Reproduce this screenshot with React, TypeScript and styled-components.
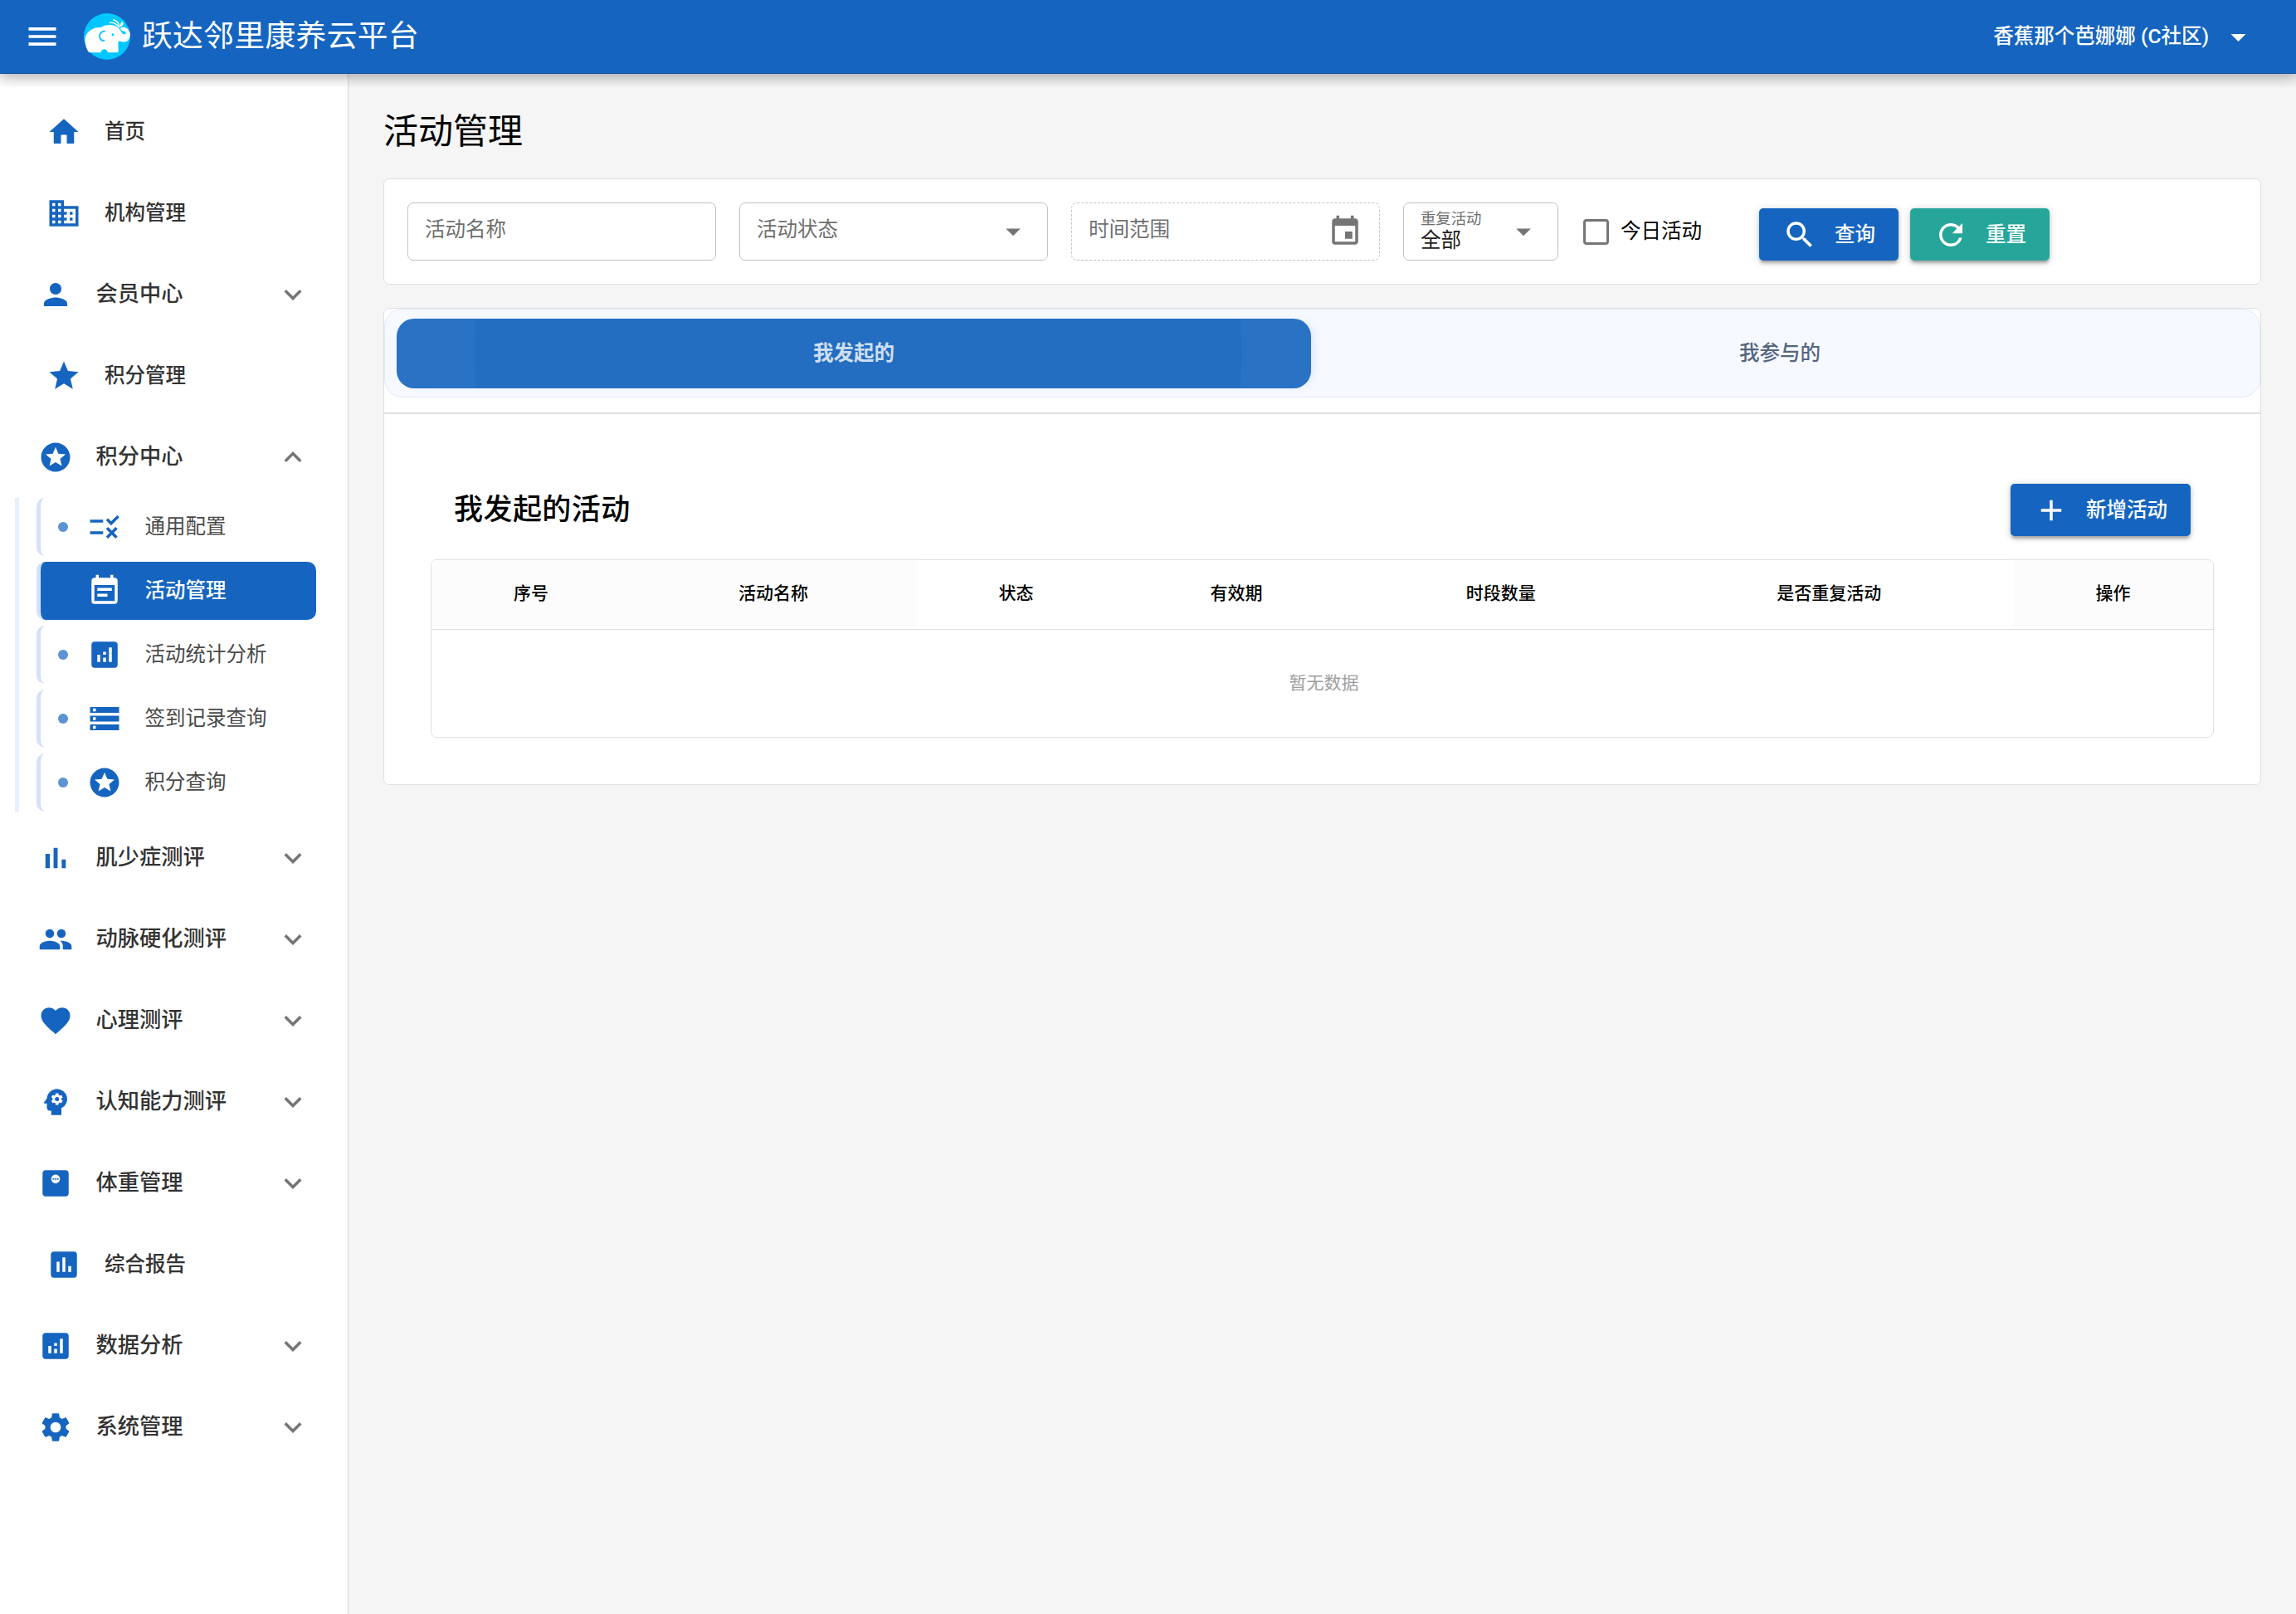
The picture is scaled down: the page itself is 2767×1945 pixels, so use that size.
import React from 'react';
import styled, { createGlobalStyle, css } from 'styled-components';
import type { IconType } from 'react-icons';
import {
  MdAdd,
  MdAnalytics,
  MdArrowDropDown,
  MdAssessment,
  MdBusiness,
  MdEvent,
  MdEventNote,
  MdFavorite,
  MdHome,
  MdKeyboardArrowDown,
  MdKeyboardArrowUp,
  MdMenu,
  MdMonitorWeight,
  MdPeople,
  MdPerson,
  MdPsychology,
  MdRefresh,
  MdRule,
  MdSearch,
  MdSettings,
  MdStar,
  MdStars,
  MdStorage,
} from 'react-icons/md';

const colors = {
  primary: '#1565c0',
  secondary: '#26a69a',
  page: '#f5f5f5',
  line: '#e0e0e0',
  icon: '#757575',
};

const GlobalStyle = createGlobalStyle`
  *, *::before, *::after { box-sizing: border-box; }
  body {
    margin: 0;
    background: ${colors.page};
    color: #000;
    font-family: Roboto, "Noto Sans CJK SC", sans-serif;
    font-size: 24.5px;
    line-height: 1.5;
  }
  svg { display: block; flex: none; }
`;

const Layout = styled.div`
  display: flex;
  flex-direction: column;
  height: 1945px;
  overflow: hidden;
`;

const Header = styled.header`
  position: relative;
  z-index: 2;
  display: flex;
  align-items: center;
  flex: none;
  height: 89px;
  padding: 0 48px 0 29px;
  background: ${colors.primary};
  border-bottom: 1px solid #124f92;
  color: #fff;
`;

/* Clips the header's shadow to a short strip under the bar. */
const HeaderShadow = styled.div`
  position: absolute;
  inset: 0 0 -17px 0;
  overflow: hidden;
  pointer-events: none;
  z-index: -1;

  &::after {
    content: '';
    position: absolute;
    inset: 0 0 16px 0;
    box-shadow: 0 0 17.5px 3.5px rgba(0, 0, 0, 0.2), 0 0 17.5px rgba(0, 0, 0, 0.24);
  }
`;

const Logo = styled.svg`
  width: 56px;
  height: 56px;
  margin-left: 28px;
`;

const Brand = styled.div`
  margin-left: 14px;
  font-size: 36.75px;
  letter-spacing: 0.01em;
  line-height: 56px;
`;

const Account = styled.button`
  display: flex;
  align-items: center;
  gap: 14px;
  margin-left: auto;
  padding: 0;
  border: 0;
  background: none;
  color: inherit;
  font: 500 24.5px/42px Roboto, "Noto Sans CJK SC", sans-serif;
`;

const Body = styled.div`
  display: flex;
  flex: 1;
  min-height: 0;
`;

const Sidebar = styled.nav`
  flex: none;
  width: 420px;
  padding-top: 21px;
  background: #fff;
  border-right: 1px solid #d9d9d9;
`;

const NavRow = styled.div<{ $leaf?: boolean }>`
  display: flex;
  align-items: center;
  height: 98px;
  padding: 0 45px 0 ${(p) => (p.$leaf ? 56 : 45.5)}px;
  color: #333;
  font-size: ${(p) => (p.$leaf ? 24.5 : 26.25)}px;
  font-weight: 500;

  & > svg:first-child { color: ${colors.primary}; }
`;

const NavLabel = styled.span`
  flex: 1;
  margin-left: 28px;
  white-space: nowrap;
`;

const SubNav = styled.div`
  display: flex;
  flex-direction: column;
  gap: 7px;
  margin: 0 0 7px 18px;
  padding-left: 21px;
  border-left: 5px solid #e8effd;
`;

const SubRow = styled.div<{ $active?: boolean }>`
  display: flex;
  align-items: center;
  width: 337px;
  height: 70px;
  padding-left: 21px;
  border-left: 5px solid #d5e1f8;
  border-radius: 10.5px;
  color: #4a4a4a;

  & > svg { color: ${colors.primary}; margin-left: 22.5px; }

  ${(p) =>
    p.$active &&
    css`
      background: ${colors.primary};
      color: #fff;
      font-weight: 500;
      & > svg { color: #fff; }
    `}
`;

const Dot = styled.i<{ $hidden?: boolean }>`
  width: 12px;
  height: 12px;
  border-radius: 50%;
  background: #5b93d3;
  visibility: ${(p) => (p.$hidden ? 'hidden' : 'visible')};
`;

const SubLabel = styled.span`
  margin-left: 28px;
  white-space: nowrap;
`;

const Main = styled.main`
  flex: 1;
  min-width: 0;
  padding: 42px 42px 0;
`;

const PageTitle = styled.h1`
  margin: 0 0 28px;
  font-size: 42px;
  font-weight: 400;
  line-height: 56px;
`;

const Card = styled.section`
  background: #fff;
  border: 1px solid ${colors.line};
  border-radius: 7px;
`;

const FilterCard = styled(Card)`
  display: flex;
  align-items: flex-end;
  gap: 28px;
  height: 128px;
  padding: 28px;
  margin-bottom: 28px;
`;

const Field = styled.div<{ $width: number; $dashed?: boolean }>`
  display: flex;
  align-items: center;
  width: ${(p) => p.$width}px;
  height: 70px;
  padding: 0 20px;
  border: 1px ${(p) => (p.$dashed ? 'dashed' : 'solid')} #c2c2c2;
  border-radius: 7px;
  color: ${colors.icon};

  & > svg { margin-left: auto; }
`;

const Placeholder = styled.span`
  color: #6f6f6f;
  line-height: 35px;
  padding-bottom: 5px;
`;

const Stacked = styled.div`
  display: flex;
  flex-direction: column;
  padding-bottom: 2px;
`;

const SmallLabel = styled.span`
  font-size: 18.375px;
  line-height: 24px;
  color: #6f6f6f;
`;

const FieldValue = styled.span`
  line-height: 28px;
  color: #212121;
`;

const CheckField = styled.label`
  display: flex;
  align-items: center;
  gap: 14px;
  width: 186px;
  height: 70px;
  padding-left: 2px;
  white-space: nowrap;
`;

const CheckBox = styled.span`
  flex: none;
  width: 31px;
  height: 31px;
  border: 3px solid ${colors.icon};
  border-radius: 4px;
`;

const Actions = styled.div`
  display: flex;
  gap: 14px;
`;

const Button = styled.button<{ $color: string }>`
  display: flex;
  align-items: center;
  gap: 21px;
  height: 63px;
  padding: 0 28px;
  border: 0;
  border-radius: 5px;
  background: ${(p) => p.$color};
  color: #fff;
  font: 500 24.5px/42px Roboto, "Noto Sans CJK SC", sans-serif;
  white-space: nowrap;
  box-shadow: 0 1.75px 8.75px rgba(0, 0, 0, 0.2), 0 3.5px 3.5px rgba(0, 0, 0, 0.14),
    0 5.25px 1.75px -3.5px rgba(0, 0, 0, 0.12);
`;

const TabCard = styled(Card)`
  height: 575px;
`;

const Tabs = styled.div`
  display: flex;
  gap: 14px;
  height: 107px;
  padding: 11px 27px 0 14px;
  background: #f6f9ff;
  border: 1px solid #e2e9f6;
  border-radius: 22px;
`;

const Tab = styled.div<{ $active?: boolean }>`
  display: flex;
  align-items: center;
  justify-content: center;
  flex: 1;
  height: 84px;
  border-radius: 21px;
  color: #56657f;
  font-weight: 500;

  ${(p) =>
    p.$active &&
    css`
      background: radial-gradient(circle at 556px 42px, #246ec1 462px, #2a72c3 463px);
      box-shadow: 7px 0 14px -7px rgba(21, 101, 192, 0.18);
      color: #cfdff2;
      font-weight: 600;
    `}
`;

const Separator = styled.hr`
  height: 2px;
  margin: 18px 0 0;
  border: 0;
  background: ${colors.line};
`;

const Panel = styled.div`
  padding: 84px 56px 0;
`;

const PanelHead = styled.div`
  display: flex;
  align-items: center;
  justify-content: space-between;
  height: 63px;
  padding: 0 28px;
`;

const PanelTitle = styled.h2`
  margin: 0;
  font-size: 35px;
  font-weight: 500;
  letter-spacing: 0.0125em;
  line-height: 56px;
`;

const Table = styled.div`
  display: flex;
  flex-direction: column;
  margin-top: 28px;
  height: 215px;
  border: 1px solid ${colors.line};
  border-radius: 7px;
  overflow: hidden;
  font-size: 21px;
`;

const HeadRow = styled.div`
  display: grid;
  grid-template-columns: 240fr 344fr 241fr 290fr 347.5fr 443.5fr 241fr;
  flex: none;
  height: 84px;
  border-bottom: 1px solid ${colors.line};
`;

const HeadCell = styled.div<{ $pinned?: boolean }>`
  display: flex;
  align-items: center;
  justify-content: center;
  padding-bottom: 1px;
  background: ${(p) => (p.$pinned ? '#fcfcfc' : '#fff')};
  font-weight: 500;
`;

const Empty = styled.div`
  display: flex;
  flex: 1;
  align-items: center;
  justify-content: center;
  padding-left: 4px;
  color: #9e9e9e;
`;

type NavEntry = {
  label: string;
  icon: IconType;
  leaf?: boolean;
  open?: boolean;
  children?: { label: string; icon: IconType; active?: boolean }[];
};

const BarsIcon: IconType = ({ size }) => (
  <svg viewBox="0 0 24 24" width={size} height={size} fill="currentColor">
    <path d="M5 9.2h3V19H5zM10.6 5h2.8v14h-2.8zm5.6 8H19v6h-2.8z" />
  </svg>
);

const navigation: NavEntry[] = [
  { label: '首页', icon: MdHome, leaf: true },
  { label: '机构管理', icon: MdBusiness, leaf: true },
  { label: '会员中心', icon: MdPerson },
  { label: '积分管理', icon: MdStar, leaf: true },
  {
    label: '积分中心',
    icon: MdStars,
    open: true,
    children: [
      { label: '通用配置', icon: MdRule },
      { label: '活动管理', icon: MdEventNote, active: true },
      { label: '活动统计分析', icon: MdAnalytics },
      { label: '签到记录查询', icon: MdStorage },
      { label: '积分查询', icon: MdStars },
    ],
  },
  { label: '肌少症测评', icon: BarsIcon },
  { label: '动脉硬化测评', icon: MdPeople },
  { label: '心理测评', icon: MdFavorite },
  { label: '认知能力测评', icon: MdPsychology },
  { label: '体重管理', icon: MdMonitorWeight },
  { label: '综合报告', icon: MdAssessment, leaf: true },
  { label: '数据分析', icon: MdAnalytics },
  { label: '系统管理', icon: MdSettings },
];

const columns = [
  { label: '序号', pinned: true },
  { label: '活动名称', pinned: true },
  { label: '状态' },
  { label: '有效期' },
  { label: '时段数量' },
  { label: '是否重复活动' },
  { label: '操作', pinned: true },
];

function ElephantLogo() {
  return (
    <Logo viewBox="0 0 168 168">
      <circle cx="84" cy="84" r="84" fill="#00c8ff" />
      <path
        fill="#fff"
        d="M4 96C6 70 26 51 62 51C72 44 84 41 97 42C114 43 127 51 134 64C137 72 142 77 148 76C153 75 154 69 149 66C145 64 140 64 137 62L131 53C140 48 153 50 160 58C168 68 170 82 164 92C158 104 142 107 127 100L124 108L125 138Q124 142 120 142L86 142C86 126 62 126 62 142L20 142C12 134 6 120 4 96Z"
      />
      <path
        d="M75 64C60 66 53 80 59 91C62 97 67 99 73 99"
        fill="none"
        stroke="#00c8ff"
        strokeWidth="5.5"
        strokeLinecap="round"
      />
      <circle cx="105" cy="77" r="4.5" fill="#00c8ff" />
      <g fill="none" stroke="#fff" strokeWidth="4.5" strokeLinecap="round">
        <path d="M95 34C104 32 117 37 127 50" />
        <path d="M107 24C117 25 125 34 129 47" />
        <path d="M134 45C134 39 136 34 140 33C142 38 139 43 134 46" strokeWidth="4" />
      </g>
    </Logo>
  );
}

export default function App() {
  return (
    <Layout>
      <GlobalStyle />
      <Header>
        <HeaderShadow />
        <MdMenu size={44} />
        <ElephantLogo />
        <Brand>跃达邻里康养云平台</Brand>
        <Account>
          香蕉那个芭娜娜 (C社区)
          <MdArrowDropDown size={43} />
        </Account>
      </Header>
      <Body>
        <Sidebar>
          {navigation.map(({ label, icon: Icon, leaf, open, children }) => (
            <React.Fragment key={label}>
              <NavRow $leaf={leaf}>
                <Icon size={42} />
                <NavLabel>{label}</NavLabel>
                {!leaf && (open ? <MdKeyboardArrowUp size={42} color={colors.icon} /> : <MdKeyboardArrowDown size={42} color={colors.icon} />)}
              </NavRow>
              {children && (
                <SubNav>
                  {children.map(({ label: text, icon: SubIcon, active }) => (
                    <SubRow key={text} $active={active}>
                      <Dot $hidden={active} />
                      <SubIcon size={42} />
                      <SubLabel>{text}</SubLabel>
                    </SubRow>
                  ))}
                </SubNav>
              )}
            </React.Fragment>
          ))}
        </Sidebar>
        <Main>
          <PageTitle>活动管理</PageTitle>
          <FilterCard>
            <Field $width={372}>
              <Placeholder>活动名称</Placeholder>
            </Field>
            <Field $width={372}>
              <Placeholder>活动状态</Placeholder>
              <MdArrowDropDown size={42} />
            </Field>
            <Field $width={372} $dashed>
              <Placeholder>时间范围</Placeholder>
              <MdEvent size={42} />
            </Field>
            <Field $width={187}>
              <Stacked>
                <SmallLabel>重复活动</SmallLabel>
                <FieldValue>全部</FieldValue>
              </Stacked>
              <MdArrowDropDown size={42} />
            </Field>
            <CheckField>
              <CheckBox />
              今日活动
            </CheckField>
            <Actions>
              <Button $color={colors.primary}>
                <MdSearch size={42} />
                查询
              </Button>
              <Button $color={colors.secondary}>
                <MdRefresh size={42} />
                重置
              </Button>
            </Actions>
          </FilterCard>
          <TabCard>
            <Tabs>
              <Tab $active>我发起的</Tab>
              <Tab>我参与的</Tab>
            </Tabs>
            <Separator />
            <Panel>
              <PanelHead>
                <PanelTitle>我发起的活动</PanelTitle>
                <Button $color={colors.primary}>
                  <MdAdd size={42} />
                  新增活动
                </Button>
              </PanelHead>
              <Table>
                <HeadRow>
                  {columns.map((column) => (
                    <HeadCell key={column.label} $pinned={column.pinned}>
                      {column.label}
                    </HeadCell>
                  ))}
                </HeadRow>
                <Empty>暂无数据</Empty>
              </Table>
            </Panel>
          </TabCard>
        </Main>
      </Body>
    </Layout>
  );
}
